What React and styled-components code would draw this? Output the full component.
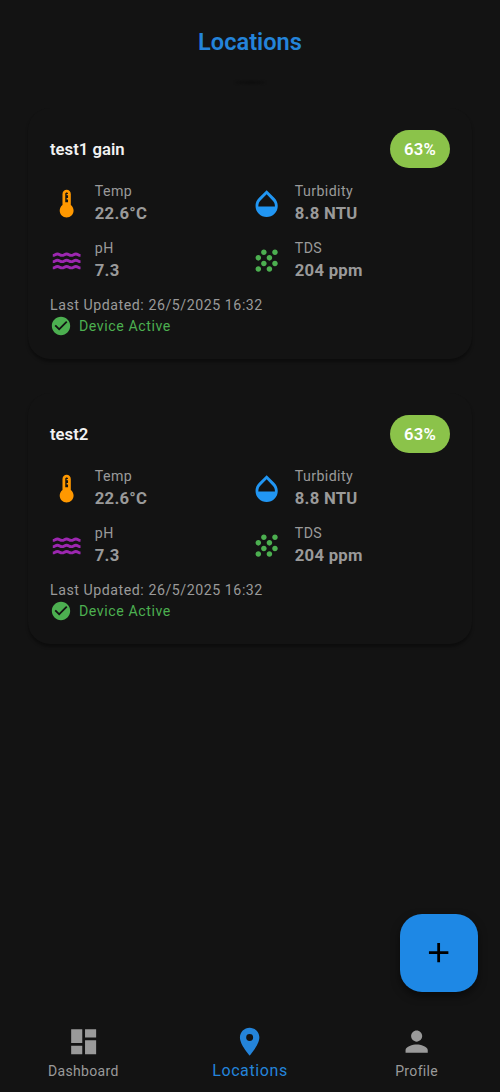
import React from "react"

import styled, { createGlobalStyle } from "styled-components"
import {
  MdAdd,
  MdCheckCircle,
  MdDashboard,
  MdDeviceThermostat,
  MdGrain,
  MdLocationOn,
  MdOpacity,
  MdPerson,
} from "react-icons/md"

const GlobalStyle = createGlobalStyle`
  * {
    box-sizing: border-box;
  }
  body {
    margin: 0;
    background: #131313;
    font-family: Roboto, "Liberation Sans", sans-serif;
  }
`

const Screen = styled.div`
  position: relative;
  display: flex;
  flex-direction: column;
  height: 1092px;
  overflow: hidden;
  background: #131313;
`

const Header = styled.header`
  display: flex;
  flex-direction: column;
  align-items: center;
  height: 108px;
  padding-top: 28px;
`

const Title = styled.h1`
  margin: 0;
  font-size: 23.6px;
  line-height: 28px;
  font-weight: 600;
  color: #2484da;
`

const PullShadow = styled.div`
  width: 30px;
  height: 3px;
  margin-top: 25px;
  border-radius: 50%;
  background: #0e0e0e;
  filter: blur(1px);
`

const List = styled.main`
  flex: 1;
  display: flex;
  flex-direction: column;
  gap: 34px;
  padding: 0 28px;
`

const Card = styled.section`
  height: 251px;
  padding: 22px 22px 0;
  border-radius: 22px;
  background: #131313;
  box-shadow: 0 3px 3px rgba(0, 0, 0, 0.35);
`

const CardHeader = styled.div`
  display: flex;
  align-items: center;
  justify-content: space-between;
  height: 38px;
`

const CardTitle = styled.h2`
  margin: 0;
  font-size: 16.7px;
  font-weight: 600;
  color: #f2f2f2;
`

const Badge = styled.span`
  display: flex;
  align-items: center;
  justify-content: center;
  width: 60px;
  height: 38px;
  border-radius: 19px;
  font-size: 16.7px;
  font-weight: 600;
  letter-spacing: 0.2px;
  color: white;
  background: #8bc34a;
`

const Readings = styled.div`
  display: grid;
  grid-template-columns: 200px 200px;
  grid-auto-rows: 46px;
  row-gap: 11px;
  margin-top: 13px;
`

const Reading = styled.div`
  display: flex;
  align-items: center;
  gap: 11.5px;
  color: #9a9a9a;

  svg {
    color: ${props => props.$color};
  }
`

const ReadingText = styled.div`
  padding-bottom: 2px;
`

const Label = styled.div`
  font-size: 14.2px;
  line-height: 21px;
  letter-spacing: 0.4px;
`

const Value = styled.div`
  font-size: 16.7px;
  line-height: 24px;
  font-weight: 700;
  letter-spacing: 0.25px;
`

const Updated = styled.div`
  margin-top: 11px;
  font-size: 14.2px;
  line-height: 21px;
  letter-spacing: 0.54px;
  color: #9a9a9a;
`

const Status = styled.div`
  display: flex;
  align-items: center;
  gap: 7px;
  height: 20px;
  font-size: 14.2px;
  letter-spacing: 0.56px;
  color: #4caf50;
`

const AddButton = styled.button`
  position: absolute;
  right: 22px;
  bottom: 100px;
  display: flex;
  align-items: center;
  justify-content: center;
  width: 78px;
  height: 78px;
  padding: 0;
  border: 0;
  border-radius: 22px;
  color: black;
  background: #1e88e5;
  box-shadow: 0 4px 8px rgba(0, 0, 0, 0.5);
`

const TabBar = styled.nav`
  display: grid;
  grid-template-columns: repeat(3, 1fr);
  height: 78px;
  padding-top: 11px;
`

const Tab = styled.div`
  display: flex;
  flex-direction: column;
  align-items: center;
  font-size: ${props => (props.$active ? "16px" : "14px")};
  letter-spacing: ${props => (props.$active ? "0.6px" : "0.35px")};
  color: ${props => (props.$active ? "#2484da" : "#9a9a9a")};

  span {
    line-height: 26px;
  }
`

const wave = "c1.6 0 1.75-1 3.35-1s1.7 1 3.3 1 1.75-1 3.35-1 1.7 1 3.3 1 1.75-1 3.35-1 1.7 1 3.35 1"

const WavesIcon = ({ size }) => (
  <svg
    width={size}
    height={size}
    viewBox="0 0 24 24"
    fill="none"
    stroke="currentColor"
    strokeWidth="2.1"
  >
    <path d={`M2 8.2${wave}M2 12.7${wave}M2 17.2${wave}`} />
  </svg>
)

const readings = [
  { label: "Temp", value: "22.6°C", icon: MdDeviceThermostat, color: "#ff9800" },
  { label: "Turbidity", value: "8.8 NTU", icon: MdOpacity, color: "#2196f3" },
  { label: "pH", value: "7.3", icon: WavesIcon, color: "#9c27b0" },
  { label: "TDS", value: "204 ppm", icon: MdGrain, color: "#4caf50" },
]

const LocationCard = ({ name }) => (
  <Card>
    <CardHeader>
      <CardTitle>{name}</CardTitle>
      <Badge>63%</Badge>
    </CardHeader>
    <Readings>
      {readings.map(({ label, value, icon: Icon, color }) => (
        <Reading key={label} $color={color}>
          <Icon size={33.3} />
          <ReadingText>
            <Label>{label}</Label>
            <Value>{value}</Value>
          </ReadingText>
        </Reading>
      ))}
    </Readings>
    <Updated>Last Updated: 26/5/2025 16:32</Updated>
    <Status>
      <MdCheckCircle size={22} />
      Device Active
    </Status>
  </Card>
)

const App = () => (
  <Screen>
    <GlobalStyle />
    <Header>
      <Title>Locations</Title>
      <PullShadow />
    </Header>
    <List>
      <LocationCard name="test1 gain" />
      <LocationCard name="test2" />
    </List>
    <AddButton aria-label="Add location">
      <MdAdd size={33.3} />
    </AddButton>
    <TabBar>
      <Tab>
        <MdDashboard size={33.3} />
        <span>Dashboard</span>
      </Tab>
      <Tab $active>
        <MdLocationOn size={33.3} />
        <span>Locations</span>
      </Tab>
      <Tab>
        <MdPerson size={33.3} />
        <span>Profile</span>
      </Tab>
    </TabBar>
  </Screen>
)

export default App
